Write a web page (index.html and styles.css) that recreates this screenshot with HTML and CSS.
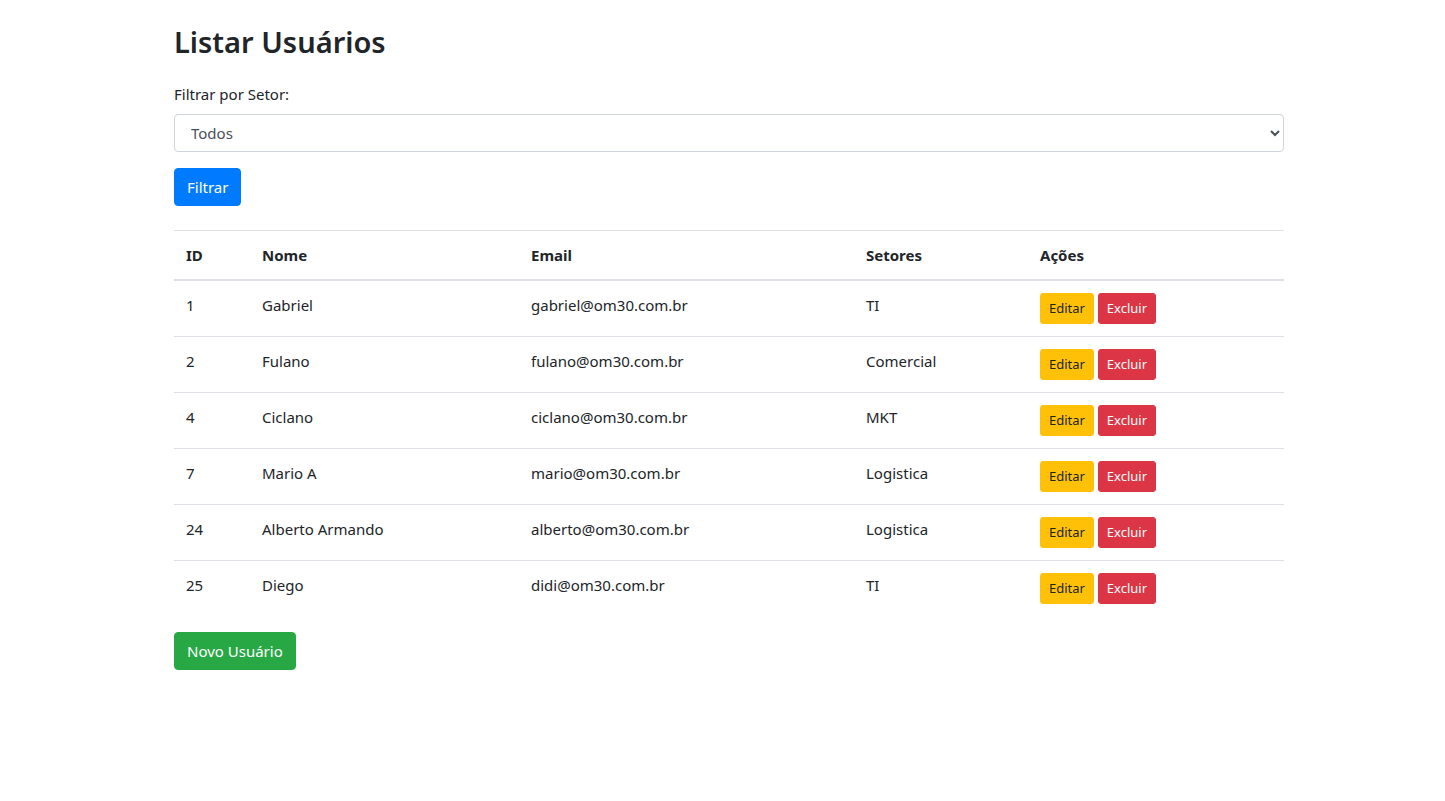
FILE: index.html
```html
<!DOCTYPE html>
<html lang="pt-BR">
<head>
<meta charset="utf-8">
<title>Listar Usuários</title>
<link rel="stylesheet" href="styles.css">
</head>
<body>
<div class="container">
  <h2 class="title">Listar Usuários</h2>
  <form class="filter">
    <div class="form-group">
      <label class="label" for="setor">Filtrar por Setor:</label>
      <select id="setor" class="form-control">
        <option>Todos</option>
        <option>TI</option>
        <option>Comercial</option>
        <option>MKT</option>
        <option>Logistica</option>
      </select>
    </div>
    <button type="button" class="btn btn-primary">Filtrar</button>
  </form>

  <table class="table">
    <colgroup>
      <col class="c-id"><col class="c-nome"><col class="c-email"><col class="c-setor"><col class="c-acoes">
    </colgroup>
    <thead>
      <tr><th>ID</th><th>Nome</th><th>Email</th><th>Setores</th><th>Ações</th></tr>
    </thead>
    <tbody>
      <tr><td>1</td><td>Gabriel</td><td>gabriel@om30.com.br</td><td>TI</td><td><button class="btn btn-sm btn-warning">Editar</button> <button class="btn btn-sm btn-danger">Excluir</button></td></tr>
      <tr><td>2</td><td>Fulano</td><td>fulano@om30.com.br</td><td>Comercial</td><td><button class="btn btn-sm btn-warning">Editar</button> <button class="btn btn-sm btn-danger">Excluir</button></td></tr>
      <tr><td>4</td><td>Ciclano</td><td>ciclano@om30.com.br</td><td>MKT</td><td><button class="btn btn-sm btn-warning">Editar</button> <button class="btn btn-sm btn-danger">Excluir</button></td></tr>
      <tr><td>7</td><td>Mario A</td><td>mario@om30.com.br</td><td>Logistica</td><td><button class="btn btn-sm btn-warning">Editar</button> <button class="btn btn-sm btn-danger">Excluir</button></td></tr>
      <tr><td>24</td><td>Alberto Armando</td><td>alberto@om30.com.br</td><td>Logistica</td><td><button class="btn btn-sm btn-warning">Editar</button> <button class="btn btn-sm btn-danger">Excluir</button></td></tr>
      <tr><td>25</td><td>Diego</td><td>didi@om30.com.br</td><td>TI</td><td><button class="btn btn-sm btn-warning">Editar</button> <button class="btn btn-sm btn-danger">Excluir</button></td></tr>
    </tbody>
  </table>

  <button type="button" class="btn btn-success">Novo Usuário</button>
</div>
</body>
</html>
```

FILE: styles.css
```css
* { box-sizing: border-box; }
html, body { margin: 0; padding: 0; background: #fff; }
body {
  font-family: "Noto Sans", "Open Sans", sans-serif;
  font-size: 15px;
  line-height: 24px;
  color: #212529;
  padding-left: 13px;
}
.container {
  width: 1110px;
  margin: 0 auto;
  padding-top: 23px;
}
.title {
  margin: 0 0 21px;
  font-size: 29px;
  font-weight: 600;
  line-height: 38px;
}
.form-group { margin-bottom: 16px; }
.label {
  display: inline-block;
  margin-bottom: 8px;
}
.form-control {
  display: block;
  width: 100%;
  height: 38px;
  padding: 6px 12px;
  font: inherit;
  font-size: 15px;
  color: #495057;
  background: #fff;
  border: 1px solid #ced4da;
  border-radius: 4px;
}
.btn {
  display: inline-block;
  font-family: inherit;
  font-size: 15px;
  font-weight: 400;
  line-height: 24px;
  padding: 6px 12px;
  border: 1px solid transparent;
  border-radius: 4px;
  color: #fff;
  cursor: pointer;
  vertical-align: middle;
}
.btn-primary { background: #007bff; border-color: #007bff; }
.btn-success { background: #28a745; border-color: #28a745; }
.btn-warning { background: #ffc107; border-color: #ffc107; color: #212529; }
.btn-danger { background: #dc3545; border-color: #dc3545; }
.btn-sm {
  font-size: 13px;
  line-height: 21px;
  padding: 4px 8px;
  border-radius: 3px;
}
.table {
  width: 100%;
  margin: 24px 0 16px;
  border-collapse: collapse;
  table-layout: fixed;
}
.c-id { width: 76px; }
.c-nome { width: 269px; }
.c-email { width: 335px; }
.c-setor { width: 174px; }
.table th, .table td {
  padding: 12px;
  text-align: left;
  vertical-align: top;
  border-top: 1px solid #dee2e6;
}
.table th { font-weight: 700; }
.table thead th { border-bottom: 2px solid #dee2e6; }
```
